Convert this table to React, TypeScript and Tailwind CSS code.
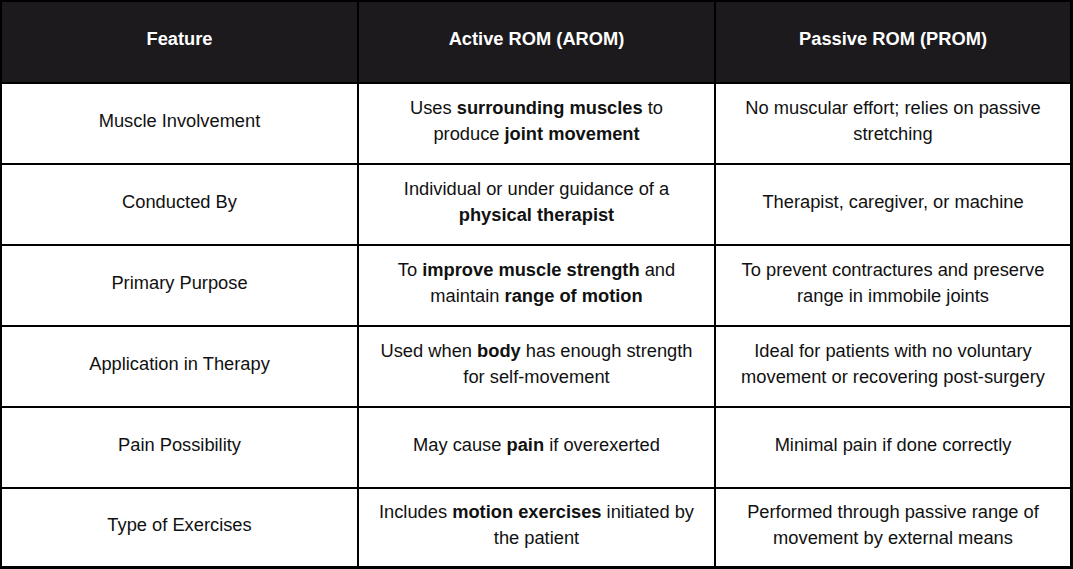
import type { ReactNode } from "react"

type Row = {
  feature: string
  active: ReactNode[]
  passive: ReactNode[]
}

const rows: Row[] = [
  {
    feature: "Muscle Involvement",
    active: [
      <>Uses <b>surrounding muscles</b> to</>,
      <>produce <b>joint movement</b></>,
    ],
    passive: ["No muscular effort; relies on passive", "stretching"],
  },
  {
    feature: "Conducted By",
    active: ["Individual or under guidance of a", <b>physical therapist</b>],
    passive: ["Therapist, caregiver, or machine"],
  },
  {
    feature: "Primary Purpose",
    active: [
      <>To <b>improve muscle strength</b> and</>,
      <>maintain <b>range of motion</b></>,
    ],
    passive: ["To prevent contractures and preserve", "range in immobile joints"],
  },
  {
    feature: "Application in Therapy",
    active: [<>Used when <b>body</b> has enough strength</>, "for self-movement"],
    passive: ["Ideal for patients with no voluntary", "movement or recovering post-surgery"],
  },
  {
    feature: "Pain Possibility",
    active: [<>May cause <b>pain</b> if overexerted</>],
    passive: ["Minimal pain if done correctly"],
  },
  {
    feature: "Type of Exercises",
    active: [<>Includes <b>motion exercises</b> initiated by</>, "the patient"],
    passive: ["Performed through passive range of", "movement by external means"],
  },
]

function Cell({ lines, last }: { lines: ReactNode[]; last?: boolean }) {
  return (
    <div
      className={`flex flex-col items-center justify-center pb-[6px] text-center ${
        last ? "" : "border-r-2 border-black"
      }`}
    >
      {lines.map((line, i) => (
        <span key={i} className="whitespace-nowrap [&_b]:font-bold">
          {line}
        </span>
      ))}
    </div>
  )
}

export default function App() {
  return (
    <div className="w-[1073px] h-[569px] bg-white font-['Liberation_Sans',Arial,sans-serif] text-[18.3px] leading-[26px] text-[#111]">
      <div className="flex h-full flex-col border-l-2 border-t-2 border-r-[3px] border-b-[3px] border-black">
        {/* Header */}
        <div className="grid h-[80px] shrink-0 grid-cols-[357px_357px_1fr] bg-[#1c1a1d] font-bold text-white">
          <div className="flex items-center justify-center border-r-2 border-black pb-[6px]">Feature</div>
          <div className="flex items-center justify-center border-r-2 border-black pb-[6px]">Active ROM (AROM)</div>
          <div className="flex items-center justify-center pb-[6px]">Passive ROM (PROM)</div>
        </div>

        {rows.map((row, i) => (
          <div
            key={row.feature}
            className={`grid grid-cols-[357px_357px_1fr] border-t-2 border-black ${
              i === rows.length - 1 ? "flex-1" : "h-[81px] shrink-0"
            }`}
          >
            <Cell lines={[row.feature]} />
            <Cell lines={row.active} />
            <Cell lines={row.passive} last />
          </div>
        ))}
      </div>
    </div>
  )
}
